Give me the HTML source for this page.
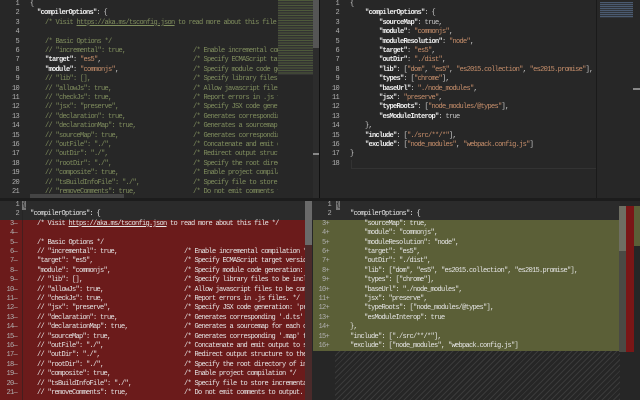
<!DOCTYPE html>
<html><head><meta charset="utf-8"><style>
*{margin:0;padding:0;box-sizing:border-box}
body{width:640px;height:400px;background:#262626;overflow:hidden;position:relative;font-family:"Liberation Mono",monospace;font-size:7px;letter-spacing:-0.7px}
.p{position:absolute;overflow:hidden}
.ln{position:absolute;height:9.4px;line-height:9.4px;white-space:pre}
.n{position:absolute;text-align:right;width:21px;color:#b0b0b0}
.c{position:absolute;left:162px;color:#808e5e}
.k{color:#eee;font-weight:bold}
.s{color:#c9906c}
.cm{color:#808e5e}
.t{color:#c8c8c8}
.u{text-decoration:underline}
.bot .c,.bot .cm,.bot .s,.bot .k{color:#e6e6e6;font-weight:normal}
.bot{color:#e6e6e6}
</style></head><body>
<!-- top left -->
<div class="p" style="left:0;top:0;width:320px;height:199px;background:#272727;color:#cfcfcf">
 <div style="position:absolute;left:0;top:0;width:278px;height:199px;overflow:hidden">
  <div style="position:absolute;left:0;top:0">
   <div class="ln" style="top:0"><span class="n" style="left:-2px">1</span><span style="position:absolute;left:30px">{</span></div>
   <div class="ln" style="top:9.4px"><span class="n" style="left:-2px">2</span><span style="position:absolute;left:37px"><span class="k">"compilerOptions"</span>: {</span></div>
   <div class="ln" style="top:18.8px"><span class="n" style="left:-2px">3</span><span style="position:absolute;left:45px" class="cm">/* Visit <span class="u">https://aka.ms/tsconfig.json</span> to read more about this file */</span></div>
   <div class="ln" style="top:28.2px"><span class="n" style="left:-2px">4</span></div>
   <div class="ln" style="top:37.6px"><span class="n" style="left:-2px">5</span><span style="position:absolute;left:45px" class="cm">/* Basic Options */</span></div>
  </div>
  <div style="position:absolute;left:0;top:47px;width:278px">
   <div class="ln" style="top:0"><span class="n" style="left:-2px">6</span><span style="position:absolute;left:45px" class="cm">// "incremental": true,</span><span class="c" style="left:193px">/* Enable incremental compilation */</span></div>
   <div class="ln" style="top:9.4px"><span class="n" style="left:-2px">7</span><span style="position:absolute;left:45px"><span class="k">"target"</span>: <span class="s">"es5"</span>,</span><span class="c" style="left:193px">/* Specify ECMAScript target version</span></div>
   <div class="ln" style="top:18.8px"><span class="n" style="left:-2px">8</span><span style="position:absolute;left:45px"><span class="k">"module"</span>: <span class="s">"commonjs"</span>,</span><span class="c" style="left:193px">/* Specify module code generation</span></div>
   <div class="ln cm" style="top:28.2px"><span class="n" style="left:-2px">9</span><span style="position:absolute;left:45px">// "lib": [],</span><span class="c" style="left:193px">/* Specify library files to be</span></div>
   <div class="ln cm" style="top:37.6px"><span class="n" style="left:-2px">10</span><span style="position:absolute;left:45px">// "allowJs": true,</span><span class="c" style="left:193px">/* Allow javascript files to be</span></div>
   <div class="ln cm" style="top:47px"><span class="n" style="left:-2px">11</span><span style="position:absolute;left:45px">// "checkJs": true,</span><span class="c" style="left:193px">/* Report errors in .js files</span></div>
   <div class="ln cm" style="top:56.4px"><span class="n" style="left:-2px">12</span><span style="position:absolute;left:45px">// "jsx": "preserve",</span><span class="c" style="left:193px">/* Specify JSX code generation</span></div>
   <div class="ln cm" style="top:65.8px"><span class="n" style="left:-2px">13</span><span style="position:absolute;left:45px">// "declaration": true,</span><span class="c" style="left:193px">/* Generates corresponding</span></div>
   <div class="ln cm" style="top:75.2px"><span class="n" style="left:-2px">14</span><span style="position:absolute;left:45px">// "declarationMap": true,</span><span class="c" style="left:193px">/* Generates a sourcemap for</span></div>
   <div class="ln cm" style="top:84.6px"><span class="n" style="left:-2px">15</span><span style="position:absolute;left:45px">// "sourceMap": true,</span><span class="c" style="left:193px">/* Generates corresponding</span></div>
   <div class="ln cm" style="top:94px"><span class="n" style="left:-2px">16</span><span style="position:absolute;left:45px">// "outFile": "./",</span><span class="c" style="left:193px">/* Concatenate and emit output</span></div>
   <div class="ln cm" style="top:103.4px"><span class="n" style="left:-2px">17</span><span style="position:absolute;left:45px">// "outDir": "./",</span><span class="c" style="left:193px">/* Redirect output structure</span></div>
   <div class="ln cm" style="top:112.8px"><span class="n" style="left:-2px">18</span><span style="position:absolute;left:45px">// "rootDir": "./",</span><span class="c" style="left:193px">/* Specify the root directory</span></div>
   <div class="ln cm" style="top:122.2px"><span class="n" style="left:-2px">19</span><span style="position:absolute;left:45px">// "composite": true,</span><span class="c" style="left:193px">/* Enable project compilation</span></div>
   <div class="ln cm" style="top:131.6px"><span class="n" style="left:-2px">20</span><span style="position:absolute;left:45px">// "tsBuildInfoFile": "./",</span><span class="c" style="left:193px">/* Specify file to store</span></div>
   <div class="ln cm" style="top:141px"><span class="n" style="left:-2px">21</span><span style="position:absolute;left:45px">// "removeComments": true,</span><span class="c" style="left:193px">/* Do not emit comments to</span></div>
  </div>
  <div style="position:absolute;left:30px;top:194px;width:94px;height:5px;background:#444"></div>
 </div>
 <div style="position:absolute;left:278px;top:0;width:35px;height:75px;background:#333;background-image:repeating-linear-gradient(180deg,#4d5a3a 0 1px,transparent 1px 2.5px)"></div>
 <div style="position:absolute;left:313px;top:0;width:7px;height:199px;background:#2c2c2c"></div>
 <div style="position:absolute;left:313px;top:0;width:7px;height:48px;background:#555"></div>
 <div style="position:absolute;left:313px;top:153px;width:7px;height:2px;background:#888"></div>
 <div style="position:absolute;left:319px;top:0;width:1px;height:199px;background:#111"></div>
</div>
<!-- top right -->
<div class="p" style="left:320px;top:0;width:320px;height:199px;background:#272727;color:#cfcfcf">
 <div class="ln" style="top:0"><span class="n" style="left:-2px">1</span><span style="position:absolute;left:30px">{</span></div>
 <div class="ln" style="top:9.4px"><span class="n" style="left:-2px">2</span><span style="position:absolute;left:45px"><span class="k">"compilerOptions"</span>: {</span></div>
 <div class="ln" style="top:18.8px"><span class="n" style="left:-2px">3</span><span style="position:absolute;left:59px"><span class="k">"sourceMap"</span>: <span class="t">true</span>,</span></div>
 <div class="ln" style="top:28.2px"><span class="n" style="left:-2px">4</span><span style="position:absolute;left:59px"><span class="k">"module"</span>: <span class="s">"commonjs"</span>,</span></div>
 <div class="ln" style="top:37.6px"><span class="n" style="left:-2px">5</span><span style="position:absolute;left:59px"><span class="k">"moduleResolution"</span>: <span class="s">"node"</span>,</span></div>
 <div class="ln" style="top:47px"><span class="n" style="left:-2px">6</span><span style="position:absolute;left:59px"><span class="k">"target"</span>: <span class="s">"es5"</span>,</span></div>
 <div class="ln" style="top:56.4px"><span class="n" style="left:-2px">7</span><span style="position:absolute;left:59px"><span class="k">"outDir"</span>: <span class="s">"./dist"</span>,</span></div>
 <div class="ln" style="top:65.8px"><span class="n" style="left:-2px">8</span><span style="position:absolute;left:59px"><span class="k">"lib"</span>: [<span class="s">"dom"</span>, <span class="s">"es5"</span>, <span class="s">"es2015.collection"</span>, <span class="s">"es2015.promise"</span>],</span></div>
 <div class="ln" style="top:75.2px"><span class="n" style="left:-2px">9</span><span style="position:absolute;left:59px"><span class="k">"types"</span>: [<span class="s">"chrome"</span>],</span></div>
 <div class="ln" style="top:84.6px"><span class="n" style="left:-2px">10</span><span style="position:absolute;left:59px"><span class="k">"baseUrl"</span>: <span class="s">"./node_modules"</span>,</span></div>
 <div class="ln" style="top:94px"><span class="n" style="left:-2px">11</span><span style="position:absolute;left:59px"><span class="k">"jsx"</span>: <span class="s">"preserve"</span>,</span></div>
 <div class="ln" style="top:103.4px"><span class="n" style="left:-2px">12</span><span style="position:absolute;left:59px"><span class="k">"typeRoots"</span>: [<span class="s">"node_modules/@types"</span>],</span></div>
 <div class="ln" style="top:112.8px"><span class="n" style="left:-2px">13</span><span style="position:absolute;left:59px"><span class="k">"esModuleInterop"</span>: <span class="t">true</span></span></div>
 <div class="ln" style="top:122.2px"><span class="n" style="left:-2px">14</span><span style="position:absolute;left:45px">},</span></div>
 <div class="ln" style="top:131.6px"><span class="n" style="left:-2px">15</span><span style="position:absolute;left:45px"><span class="k">"include"</span>: [<span class="s">"./src/**/*"</span>],</span></div>
 <div class="ln" style="top:141px"><span class="n" style="left:-2px">16</span><span style="position:absolute;left:45px"><span class="k">"exclude"</span>: [<span class="s">"node_modules"</span>, <span class="s">"webpack.config.js"</span>]</span></div>
 <div class="ln" style="top:150.4px"><span class="n" style="left:-2px">17</span><span style="position:absolute;left:30px">}</span></div>
 <div class="ln" style="top:159.8px"><span class="n" style="left:-2px">18</span></div>
 <div style="position:absolute;left:31px;top:160px;width:245px;height:9px;border-bottom:1px solid #333;border-left:1px solid #333"></div>
 <div style="position:absolute;left:276px;top:0;width:1px;height:199px;background:#1a1a1a"></div>
 <div style="position:absolute;left:280px;top:2px;width:33px;height:16px;background:#30343a;background-image:repeating-linear-gradient(180deg,#4a5a70 0 1px,transparent 1px 2px)"></div>
 <div style="position:absolute;left:313px;top:88px;width:7px;height:2px;background:#888"></div>
</div>
<div style="position:absolute;left:0;top:198px;width:640px;height:3px;background:#1c1c1c"></div>
<!-- bottom left -->
<div class="p bot" style="left:0;top:201px;width:312px;height:199px;background:#6b1b1b">
 <div style="position:absolute;left:0;top:0;width:312px;height:19px;background:#2b2b2b"></div>
 <div style="position:absolute;left:22px;top:0;width:1px;height:199px;background:#222;opacity:.5"></div>
 <div class="ln" style="top:0"><span class="n" style="left:-2px">1</span><span style="position:absolute;left:22px;background:#777;color:#111">{</span></div>
 <div class="ln" style="top:9.4px"><span class="n" style="left:-2px">2</span><span style="position:absolute;left:30px">"compilerOptions": {</span></div>
 <div class="ln" style="top:18.8px"><span class="n" style="left:-4px">3—</span><span style="position:absolute;left:37px">/* Visit <span class="u">https://aka.ms/tsconfig.json</span> to read more about this file */</span></div>
 <div class="ln" style="top:28.2px"><span class="n" style="left:-4px">4—</span></div>
 <div class="ln" style="top:37.6px"><span class="n" style="left:-4px">5—</span><span style="position:absolute;left:37px">/* Basic Options */</span></div>
 <div class="ln" style="top:47px"><span class="n" style="left:-4px">6—</span><span style="position:absolute;left:37px">// "incremental": true,</span><span class="c" style="left:184px">/* Enable incremental compilation */</span></div>
 <div class="ln" style="top:56.4px"><span class="n" style="left:-4px">7—</span><span style="position:absolute;left:37px">"target": "es5",</span><span class="c" style="left:184px">/* Specify ECMAScript target version: 'ES3'</span></div>
 <div class="ln" style="top:65.8px"><span class="n" style="left:-4px">8—</span><span style="position:absolute;left:37px">"module": "commonjs",</span><span class="c" style="left:184px">/* Specify module code generation: 'none'</span></div>
 <div class="ln" style="top:75.2px"><span class="n" style="left:-4px">9—</span><span style="position:absolute;left:37px">// "lib": [],</span><span class="c" style="left:184px">/* Specify library files to be included</span></div>
 <div class="ln" style="top:84.6px"><span class="n" style="left:-4px">10—</span><span style="position:absolute;left:37px">// "allowJs": true,</span><span class="c" style="left:184px">/* Allow javascript files to be compiled</span></div>
 <div class="ln" style="top:94px"><span class="n" style="left:-4px">11—</span><span style="position:absolute;left:37px">// "checkJs": true,</span><span class="c" style="left:184px">/* Report errors in .js files. */</span></div>
 <div class="ln" style="top:103.4px"><span class="n" style="left:-4px">12—</span><span style="position:absolute;left:37px">// "jsx": "preserve",</span><span class="c" style="left:184px">/* Specify JSX code generation: 'preserve'</span></div>
 <div class="ln" style="top:112.8px"><span class="n" style="left:-4px">13—</span><span style="position:absolute;left:37px">// "declaration": true,</span><span class="c" style="left:184px">/* Generates corresponding '.d.ts' file</span></div>
 <div class="ln" style="top:122.2px"><span class="n" style="left:-4px">14—</span><span style="position:absolute;left:37px">// "declarationMap": true,</span><span class="c" style="left:184px">/* Generates a sourcemap for each corr</span></div>
 <div class="ln" style="top:131.6px"><span class="n" style="left:-4px">15—</span><span style="position:absolute;left:37px">// "sourceMap": true,</span><span class="c" style="left:184px">/* Generates corresponding '.map' file</span></div>
 <div class="ln" style="top:141px"><span class="n" style="left:-4px">16—</span><span style="position:absolute;left:37px">// "outFile": "./",</span><span class="c" style="left:184px">/* Concatenate and emit output to single</span></div>
 <div class="ln" style="top:150.4px"><span class="n" style="left:-4px">17—</span><span style="position:absolute;left:37px">// "outDir": "./",</span><span class="c" style="left:184px">/* Redirect output structure to the dir</span></div>
 <div class="ln" style="top:159.8px"><span class="n" style="left:-4px">18—</span><span style="position:absolute;left:37px">// "rootDir": "./",</span><span class="c" style="left:184px">/* Specify the root directory of input</span></div>
 <div class="ln" style="top:169.2px"><span class="n" style="left:-4px">19—</span><span style="position:absolute;left:37px">// "composite": true,</span><span class="c" style="left:184px">/* Enable project compilation */</span></div>
 <div class="ln" style="top:178.6px"><span class="n" style="left:-4px">20—</span><span style="position:absolute;left:37px">// "tsBuildInfoFile": "./",</span><span class="c" style="left:184px">/* Specify file to store incremental</span></div>
 <div class="ln" style="top:188px"><span class="n" style="left:-4px">21—</span><span style="position:absolute;left:37px">// "removeComments": true,</span><span class="c" style="left:184px">/* Do not emit comments to output. */</span></div>
 <div style="position:absolute;left:305px;top:0;width:7px;height:199px;background:#4a2a2a"></div>
 <div style="position:absolute;left:305px;top:0;width:7px;height:44px;background:#6a6a6a"></div>
</div>
<!-- bottom right -->
<div class="p bot" style="left:312px;top:201px;width:328px;height:199px;background:#262626">
 <div style="position:absolute;left:0;top:0;width:308px;height:19px;background:#2b2b2b"></div>
 <div style="position:absolute;left:1px;top:19px;width:307px;height:131px;background:#5b5f37"></div>
 <div style="position:absolute;left:23px;top:150px;width:285px;height:49px;background:repeating-linear-gradient(135deg,#262626 0 3px,#3a3a3a 3px 4px)"></div>
 <div class="ln" style="top:0"><span class="n" style="left:-2px">1</span><span style="position:absolute;left:24px;background:#777;color:#111">{</span></div>
 <div class="ln" style="top:9.4px"><span class="n" style="left:-2px">2</span><span style="position:absolute;left:38px">"compilerOptions": {</span></div>
 <div class="ln" style="top:18.8px"><span class="n" style="left:-4px">3+</span><span style="position:absolute;left:52px">"sourceMap": true,</span></div>
 <div class="ln" style="top:28.2px"><span class="n" style="left:-4px">4+</span><span style="position:absolute;left:52px">"module": "commonjs",</span></div>
 <div class="ln" style="top:37.6px"><span class="n" style="left:-4px">5+</span><span style="position:absolute;left:52px">"moduleResolution": "node",</span></div>
 <div class="ln" style="top:47px"><span class="n" style="left:-4px">6+</span><span style="position:absolute;left:52px">"target": "es5",</span></div>
 <div class="ln" style="top:56.4px"><span class="n" style="left:-4px">7+</span><span style="position:absolute;left:52px">"outDir": "./dist",</span></div>
 <div class="ln" style="top:65.8px"><span class="n" style="left:-4px">8+</span><span style="position:absolute;left:52px">"lib": ["dom", "es5", "es2015.collection", "es2015.promise"],</span></div>
 <div class="ln" style="top:75.2px"><span class="n" style="left:-4px">9+</span><span style="position:absolute;left:52px">"types": ["chrome"],</span></div>
 <div class="ln" style="top:84.6px"><span class="n" style="left:-4px">10+</span><span style="position:absolute;left:52px">"baseUrl": "./node_modules",</span></div>
 <div class="ln" style="top:94px"><span class="n" style="left:-4px">11+</span><span style="position:absolute;left:52px">"jsx": "preserve",</span></div>
 <div class="ln" style="top:103.4px"><span class="n" style="left:-4px">12+</span><span style="position:absolute;left:52px">"typeRoots": ["node_modules/@types"],</span></div>
 <div class="ln" style="top:112.8px"><span class="n" style="left:-4px">13+</span><span style="position:absolute;left:52px">"esModuleInterop": true</span></div>
 <div class="ln" style="top:122.2px"><span class="n" style="left:-4px">14+</span><span style="position:absolute;left:38px">},</span></div>
 <div class="ln" style="top:131.6px"><span class="n" style="left:-4px">15+</span><span style="position:absolute;left:38px">"include": ["./src/**/*"],</span></div>
 <div class="ln" style="top:141px"><span class="n" style="left:-4px">16+</span><span style="position:absolute;left:38px">"exclude": ["node_modules", "webpack.config.js"]</span></div>
 <div style="position:absolute;left:307px;top:5px;width:8px;height:146px;background:#4a4a44"></div>
 <div style="position:absolute;left:307px;top:5px;width:8px;height:45px;background:#6e6e62"></div>
 <div style="position:absolute;left:314px;top:5px;width:8px;height:146px;background:#7a1616"></div>
 <div style="position:absolute;left:322px;top:5px;width:6px;height:40px;background:#5b5f37"></div>
</div>
</body></html>
